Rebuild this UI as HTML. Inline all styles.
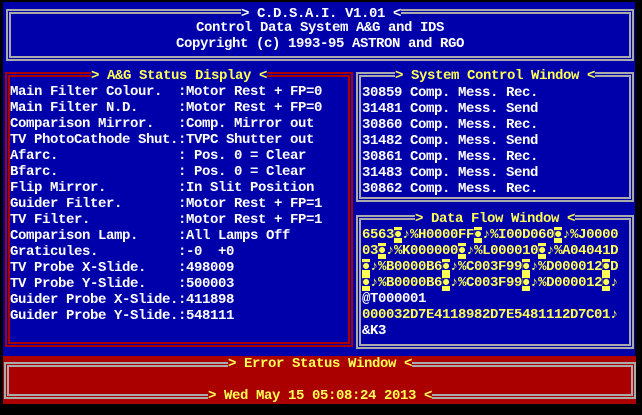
<!DOCTYPE html>
<html><head><meta charset="utf-8"><style>
*{margin:0;padding:0;box-sizing:border-box}
body{width:642px;height:415px;background:#000;position:relative;overflow:hidden;font-family:"Liberation Mono","DejaVu Sans Mono",monospace;font-size:14px;letter-spacing:-0.4px;font-weight:bold;line-height:16px;}
.abs{position:absolute}
.pre{white-space:pre}
.w{color:#fff}.y{color:#ffff55}
.box{position:absolute;border:5px double #aaa}
.red{border-color:#aa0000}
.hl{background:#ffff55;color:#0000aa}
</style></head><body>
<div class="abs" style="left:3px;top:2px;width:632px;height:354px;background:#0000aa"></div>
<div class="abs" style="left:3px;top:356px;width:633px;height:48px;background:#aa0000"></div>

<div class="box" style="left:6px;top:9px;width:628px;height:52px"></div>
<div class="abs pre w" style="left:0;width:642px;text-align:center;top:6px"><span style="background:#0000aa">&gt; C.D.S.A.I. V1.01 &lt;</span></div>
<div class="abs pre w" style="left:0;width:640px;text-align:center;top:20px">Control Data System A&amp;G and IDS</div>
<div class="abs pre w" style="left:0;width:640px;text-align:center;top:36px">Copyright (c) 1993-95 ASTRON and RGO</div>

<div class="box red" style="left:5px;top:72px;width:348px;height:275px"></div>
<div class="abs pre y" style="left:5px;width:348px;text-align:center;top:68px"><span style="background:#0000aa">&gt; A&amp;G Status Display &lt;</span></div>
<div class="abs pre w" style="left:10px;top:84px">Main Filter Colour.  :Motor Rest + FP=0
Main Filter N.D.     :Motor Rest + FP=0
Comparison Mirror.   :Comp. Mirror out
TV PhotoCathode Shut.:TVPC Shutter out
Afarc.               : Pos. 0 = Clear
Bfarc.               : Pos. 0 = Clear
Flip Mirror.         :In Slit Position
Guider Filter.       :Motor Rest + FP=1
TV Filter.           :Motor Rest + FP=1
Comparison Lamp.     :All Lamps Off
Graticules.          :-0  +0
TV Probe X-Slide.    :498009
TV Probe Y-Slide.    :500003
Guider Probe X-Slide.:411898
Guider Probe Y-Slide.:548111</div>

<div class="box" style="left:356px;top:72px;width:278px;height:130px"></div>
<div class="abs pre y" style="left:356px;width:278px;text-align:center;top:68px"><span style="background:#0000aa">&gt; System Control Window &lt;</span></div>
<div class="abs pre w" style="left:362px;top:85px">30859 Comp. Mess. Rec.
31481 Comp. Mess. Send
30860 Comp. Mess. Rec.
31482 Comp. Mess. Send
30861 Comp. Mess. Rec.
31483 Comp. Mess. Send
30862 Comp. Mess. Rec.</div>

<div class="box" style="left:356px;top:215px;width:278px;height:134px"></div>
<div class="abs pre y" style="left:356px;width:278px;text-align:center;top:211px"><span style="background:#0000aa">&gt; Data Flow Window &lt;</span></div>
<div class="abs pre y" style="left:362px;top:227px">6563<span class="hl">◘</span>♪%H0000FF<span class="hl">◘</span>♪%I00D060<span class="hl">◘</span>♪%J0000
03<span class="hl">◘</span>♪%K000000<span class="hl">◘</span>♪%L000010<span class="hl">◘</span>♪%A04041D
<span class="hl">◘</span>♪%B0000B6<span class="hl">◘</span>♪%C003F99<span class="hl">◘</span>♪%D000012<span class="hl">◘</span>D
<span class="hl">◘</span>♪%B0000B6<span class="hl">◘</span>♪%C003F99<span class="hl">◘</span>♪%D000012<span class="hl">◘</span>♪
<span class="w">@T000001</span>
000032D7E4118982D7E5481112D7C01♪
<span class="w">&amp;K3</span></div>

<div class="box" style="left:4px;top:362px;width:632px;height:37px"></div>
<div class="abs pre y" style="left:4px;width:632px;text-align:center;top:356px"><span style="background:#aa0000">&gt; Error Status Window &lt;</span></div>
<div class="abs pre y" style="left:4px;width:632px;text-align:center;top:388px"><span style="background:#aa0000">&gt; Wed May 15 05:08:24 2013 &lt;</span></div>
</body></html>
